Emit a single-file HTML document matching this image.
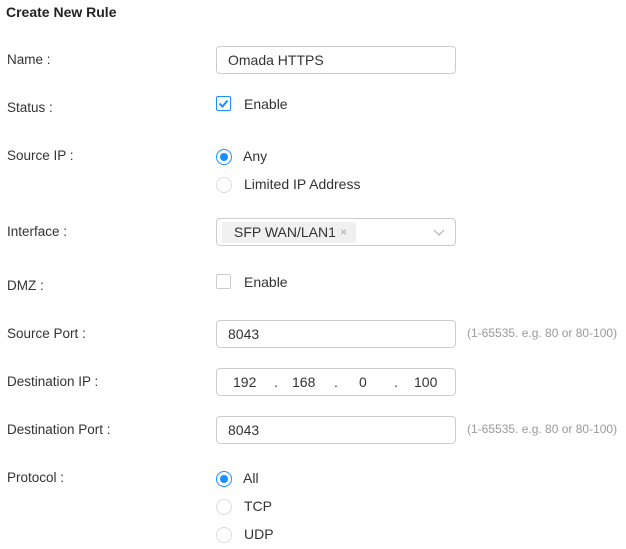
<!DOCTYPE html><html><head><style>
body{margin:0;width:626px;height:549px;background:#fff;font-family:"Liberation Sans",sans-serif;color:#333;font-size:14px;position:relative;overflow:hidden}
.a{position:absolute;white-space:nowrap}
.lbl{position:absolute;left:7px;font-size:13.5px}
.in{position:absolute;left:216px;width:238px;height:26px;border:1px solid #ccc;border-radius:4px}
.in span{position:absolute;top:5px;left:11px}
.hint{position:absolute;left:467px;font-size:12px;color:#999}
.rad{position:absolute;left:216px;width:14px;height:14px;border:1px solid #ddd;border-radius:50%}
.rad.on{border-color:#1890ff}
.rad.on:after{content:"";position:absolute;left:3px;top:3px;width:8px;height:8px;border-radius:50%;background:#1890ff}
.cb{position:absolute;left:216px;width:13px;height:13px;border:1px solid #ccc;border-radius:2px}
</style></head><body>
<div class="a" style="left:6px;top:4px;font-weight:bold;font-size:14px;color:#222">Create New Rule</div>
<div class="lbl" style="top:52px">Name :</div>
<div class="in" style="top:46px"><span>Omada HTTPS</span></div>
<div class="lbl" style="top:100px">Status :</div>
<div class="cb" style="top:96px;border-color:#1890ff"><svg width="13" height="13" style="position:absolute;left:0;top:0"><path d="M2.5 6.5l3 3L10.5 3.5" stroke="#1890ff" stroke-width="2" fill="none"/></svg></div>
<div class="a" style="left:244px;top:96px">Enable</div>
<div class="lbl" style="top:148px">Source IP :</div>
<div class="rad on" style="top:149px"></div><div class="a" style="left:243px;top:148px">Any</div>
<div class="rad" style="top:177px"></div><div class="a" style="left:244px;top:176px">Limited IP Address</div>
<div class="lbl" style="top:224px">Interface :</div>
<div class="in" style="top:218px"><div class="a" style="left:5px;top:3px;width:134px;height:21px;background:#f0f0f0;border-radius:2px"><span style="position:absolute;left:12px;top:2px">SFP WAN/LAN1</span><span style="position:absolute;left:118px;top:3px;color:#aaa;font-size:12px">×</span></div>
<svg width="12" height="8" style="position:absolute;left:216px;top:10px"><path d="M1 1l5 5 5-5" stroke="#aaa" fill="none"/></svg></div>
<div class="lbl" style="top:278px">DMZ :</div>
<div class="cb" style="top:274px"></div><div class="a" style="left:244px;top:274px">Enable</div>
<div class="lbl" style="top:326px">Source Port :</div>
<div class="in" style="top:320px"><span>8043</span></div>
<div class="hint" style="top:326px">(1-65535. e.g. 80 or 80-100)</div>
<div class="lbl" style="top:374px">Destination IP :</div>
<div class="in" style="top:368px"><span style="left:16px">192</span><span style="left:57px">.</span><span style="left:75px">168</span><span style="left:117px">.</span><span style="left:142px">0</span><span style="left:177px">.</span><span style="left:197px">100</span></div>
<div class="lbl" style="top:422px">Destination Port :</div>
<div class="in" style="top:416px"><span>8043</span></div>
<div class="hint" style="top:422px">(1-65535. e.g. 80 or 80-100)</div>
<div class="lbl" style="top:470px">Protocol :</div>
<div class="rad on" style="top:471px"></div><div class="a" style="left:243px;top:470px">All</div>
<div class="rad" style="top:499px"></div><div class="a" style="left:244px;top:498px">TCP</div>
<div class="rad" style="top:527px"></div><div class="a" style="left:244px;top:526px">UDP</div>
</body></html>
